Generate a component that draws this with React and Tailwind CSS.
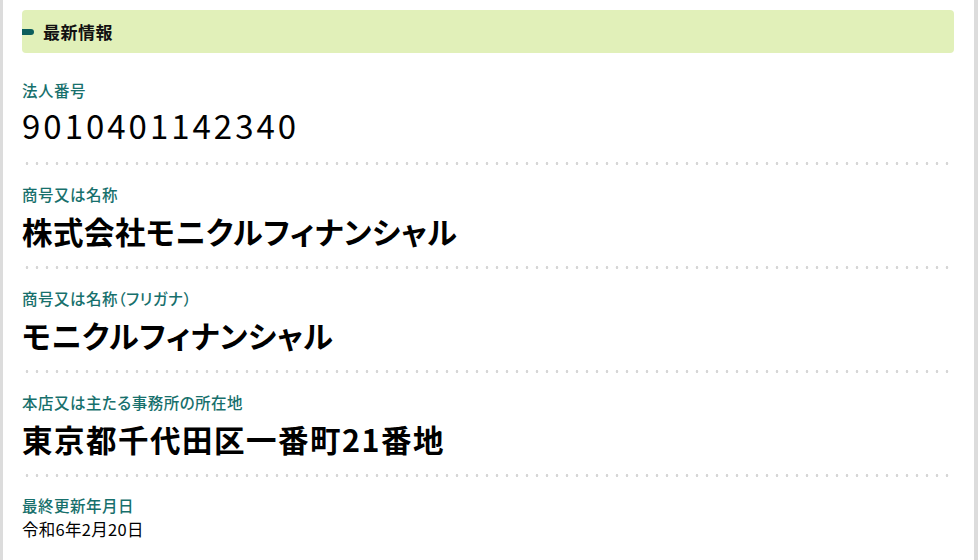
import React from 'react';

const font = { fontFamily: '"Noto Sans CJK JP", "Noto Sans", sans-serif' };

const rows = [
    { label: '法人番号', value: '9010401142340', kind: 'number' },
    { label: '商号又は名称', value: '株式会社モニクルフィナンシャル', kind: 'bold' },
    { label: '商号又は名称（フリガナ）', value: 'モニクルフィナンシャル', kind: 'bold' },
    { label: '本店又は主たる事務所の所在地', value: '東京都千代田区一番町21番地', kind: 'address' },
];

const valueClass = {
    number: 'mt-[7px] h-[38px] text-[33px] leading-[36px] tracking-[3px] text-black font-normal',
    bold: 'mt-[9px] h-[36px] text-[30.5px] leading-[36px] tracking-[0.5px] text-black font-bold [font-feature-settings:"palt"]',
    address: 'mt-[9px] h-[36px] text-[30.5px] leading-[36px] tracking-[1.5px] text-black font-bold [font-feature-settings:"palt"]',
};

function Dots() {
    return (
        <div className="h-[3px] w-full bg-[radial-gradient(circle,#d6d6d6_1.1px,transparent_1.6px)] bg-[length:10px_3px] bg-repeat-x" />
    );
}

function Label({ children }) {
    return (
        <div className="h-[20px] text-[15.5px] leading-[20px] tracking-[0.5px] text-[#17706c] font-medium [font-feature-settings:'palt']">
            {children}
        </div>
    );
}

function Field({ label, value, kind, first }) {
    return (
        <div className={first ? 'pt-[27px]' : 'pt-[19px]'}>
            <Label>{label}</Label>
            <div className={valueClass[kind]}>{value}</div>
            <div className="mt-[17px]">
                <Dots />
            </div>
        </div>
    );
}

export default function App() {
    return (
        <div style={font} className="w-[978px] h-[560px] bg-white border-l-[3px] border-r-4 border-[#dcdcdc] overflow-hidden">
            <div className="pl-[19px] pr-[20px] pt-[10px]">
                {/* Header */}
                <div className="h-[43px] rounded bg-[#e1f0b9] flex items-center">
                    <span className="w-[12px] h-[6px] rounded-r-full bg-[#0d5e5c]" />
                    <span className="ml-[9px] text-[17px] tracking-[0.5px] font-bold text-[#111]">最新情報</span>
                </div>

                {/* Fields */}
                {rows.map((r, i) => (
                    <Field key={r.label} first={i === 0} {...r} />
                ))}

                <div className="pt-[18px]">
                    <Label>最終更新年月日</Label>
                </div>
                <div className="mt-[3px] h-[22px] text-[16.5px] leading-[22px] tracking-[0.3px] text-black">令和6年2月20日</div>
            </div>
        </div>
    );
}
